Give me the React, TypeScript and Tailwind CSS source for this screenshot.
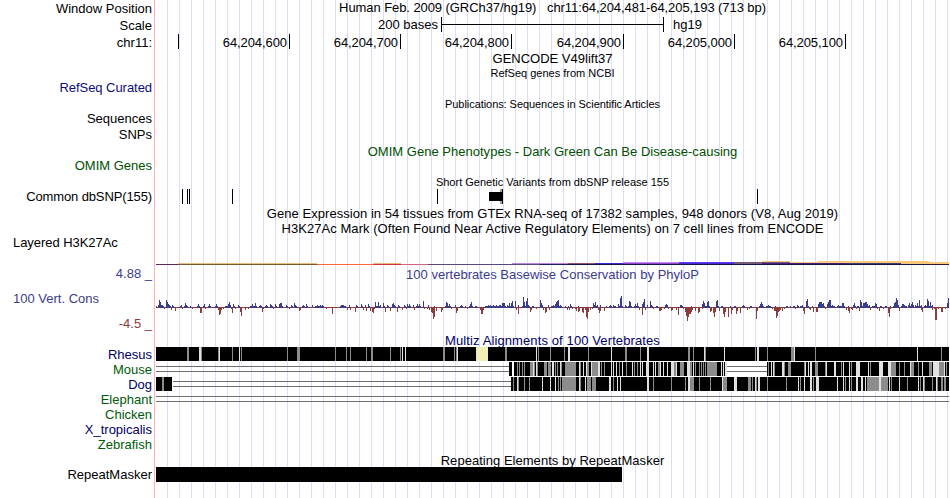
import React from 'react';
import clsx from 'clsx';

const START = 156;
const WIDTH = 793;

const labels = [
  { text: 'Window Position', cls: 'mt-px' },
  { text: 'Scale', cls: 'mt-[2px]' },
  { text: 'chr11:', cls: 'mt-[2px]' },
  { text: 'RefSeq Curated', cls: 'mt-[30px] tracking-[-0.05px] text-[#0c0c78]' },
  { text: 'Sequences', cls: 'mt-[16px]' },
  { text: 'SNPs', cls: 'mt-px' },
  { text: 'OMIM Genes', cls: 'mt-[16px] text-[#005000]' },
  { text: 'Common dbSNP(155)', cls: 'mt-[16px] tracking-[-0.12px]' },
  { text: 'Layered H3K27Ac', cls: 'mt-[31px] self-start ml-[13px] tracking-[-0.05px]' },
  { text: '4.88 _', cls: 'mt-[16px] text-[#3c3c8c]' },
  { text: '100 Vert. Cons', cls: 'mt-[10px] self-start ml-[13px] text-[#3c3c8c]' },
  { text: '-4.5 _', cls: 'mt-[10px] text-[#8c3c3c]' },
  { text: 'Rhesus', cls: 'mt-[16px] text-[#000064]' },
  { text: 'Mouse', cls: 'text-[#005a0a]' },
  { text: 'Dog', cls: 'text-[#000064]' },
  { text: 'Elephant', cls: 'text-[#005a0a]' },
  { text: 'Chicken', cls: 'text-[#005a0a]' },
  { text: 'X_tropicalis', cls: 'text-[#000064]' },
  { text: 'Zebrafish', cls: 'text-[#005a0a]' },
  { text: 'RepeatMasker', cls: 'mt-[15px]' },
];

const ruler = [
  { x: 178, text: '' },
  { x: 289, text: '64,204,600' },
  { x: 400, text: '64,204,700' },
  { x: 511, text: '64,204,800' },
  { x: 623, text: '64,204,900' },
  { x: 734, text: '64,205,000' },
  { x: 845, text: '64,205,100' },
];

// conservation peaks, "position:height"
const up =
  '158:2 159:7 160:5 161:2 162:2 166:7 167:5 168:3 169:2 172:2 181:2 185:4 186:2 198:3 204:3 209:3 216:3 228:3 229:5 230:2 233:3 238:2 252:3 255:4 260:2 266:2 270:3 271:2 275:3 279:3 280:4 281:4 286:2 291:2 294:4 295:2 303:2 306:3 312:2 317:2 ' +
  '320:2 322:2 341:2 342:2 343:2 349:2 356:2 361:3 365:2 368:3 375:5 378:5 380:2 383:4 387:2 392:3 393:4 394:2 398:2 404:2 407:3 409:3 413:2 417:3 419:3 423:6 428:2 434:1 446:5 447:4 449:3 455:2 461:2 470:3 471:5 475:1 485:1 488:2 490:2 493:2 496:2 499:2 500:2 502:4 503:4 504:4 507:2 509:4 511:4 512:6 515:6 518:2 523:10 524:5 526:6 527:9 528:2 532:1 540:7 541:4 542:2 548:2 553:2 555:3 556:5 557:6 558:7 560:2 568:1 570:3 578:1 593:4 594:2 595:5 597:2 600:2 606:1 610:2 613:2 618:3 620:9 621:11 625:2 629:6 630:5 635:3 637:4 642:3 643:5 644:8 647:2 650:6 651:2 ' +
  '656:1 665:2 666:3 667:2 680:2 681:2 691:1 702:3 703:6 704:4 707:5 708:6 716:6 717:7 718:1 722:1 730:1 735:1 743:2 750:1 760:3 761:5 762:3 767:1 768:2 775:1 787:1 793:1 797:2 ' +
  '802:2 806:6 807:8 812:1 818:3 819:5 820:5 821:5 822:3 823:4 827:3 828:5 829:7 830:7 832:2 834:1 838:2 842:4 843:4 848:1 853:2 854:4 857:1 860:7 861:5 863:4 864:4 865:5 866:5 867:3 869:2 873:1 875:4 876:3 880:1 885:1 890:1 894:4 895:5 896:9 897:7 898:2 902:3 903:3 904:2 908:2 909:4 911:3 912:5 913:2 915:2 917:4 919:7 921:2 925:2 927:8 928:6 930:5 932:2 947:4 948:9';
const down =
  '158:1 164:2 171:3 175:4 182:2 192:2 195:1 200:6 201:6 205:2 211:1 218:3 219:8 220:7 221:3 223:2 231:2 232:6 235:2 237:1 240:5 241:9 245:3 248:2 262:5 263:2 268:1 273:2 278:1 285:1 289:2 293:1 299:4 300:3 305:1 310:1 313:1 ' +
  '326:2 330:1 332:7 335:1 338:1 347:3 350:3 355:5 359:1 363:3 366:4 370:4 372:5 373:6 374:2 381:1 385:5 390:4 397:5 401:1 402:3 406:2 411:1 414:3 421:1 424:2 427:2 429:3 431:5 432:6 433:12 434:10 436:4 438:1 441:5 442:3 451:2 453:1 456:6 457:4 463:1 467:2 474:1 480:3 481:7 482:7 483:3 506:1 514:1 516:3 518:7 520:1 530:5 531:3 536:2 539:1 543:3 545:6 546:5 549:3 563:1 567:3 569:3 572:2 573:1 575:2 576:4 578:5 579:4 582:5 583:6 585:3 586:10 587:12 588:5 590:3 592:2 598:3 599:6 600:4 604:4 607:1 612:1 617:1 623:1 632:1 639:3 642:8 645:3 648:1 ' +
  '653:2 655:1 659:4 660:4 661:3 664:2 668:2 671:4 672:3 676:3 678:8 683:2 685:5 686:9 687:14 688:10 689:7 690:7 691:5 692:3 695:4 698:6 699:5 702:2 710:5 711:4 713:6 714:10 715:5 719:4 723:7 724:10 725:5 728:10 731:7 732:3 736:7 737:4 740:6 745:1 747:3 749:2 756:12 757:4 764:1 772:2 774:4 775:4 776:11 777:9 778:5 779:4 780:3 782:4 784:2 788:1 792:1 795:2 ' +
  '803:4 804:7 809:2 810:3 813:5 816:5 817:5 825:2 835:1 846:3 848:4 849:6 851:2 852:3 856:2 859:4 870:3 877:2 879:4 883:2 888:6 889:10 890:2 899:4 908:1 914:1 921:3 922:5 932:3 934:2 935:13 936:13 938:2 941:5 942:5 945:2';

// alignment marks are "position" or "position*width", grouped by shade
const species = [
  {
    name: 'rhesus',
    blocks: [[156, 793]],
    lines: [],
    grey: '187*2 201 218 232 241 287 297*3 335 346 350 366 371*2 390 400 443*2 454 456 505*2 538 550 564 588 625*2 640 688*2 693 705 755 767 791*3 815 941',
    light: '199*2 219 239 402 405 457 476 536 568*2 611 647*2 704 724 757*2 794 917',
  },
  {
    name: 'mouse',
    blocks: [[509, 3], [514, 213], [767, 182]],
    lines: [[156, 353], [727, 40]],
    grey: '517 519 522 524 530*3 534 537 544*3 548*3 555 557 561 565*11 580 587*2 592*6 601 604 619 626 634 637 658*2 674*2 680*4 690*2 695 699 701 703 705 707*10 768 774 784 788*3 804 815*3 825 841 851 870 891*5 899 904 911*3 918 929*3 939*5 946',
    light: '533 536 552*2 560 579 583 586 591 598*2 611 613 616 622 632 640 642 646*3 653 655 660 663 667 671*3 676 687*3 693 721 723 725*2 771 773 782*2 805 808 810*2 826 834*2 843 849 856*4 868 879*4 888*3 910 922 933*6 944',
  },
  {
    name: 'dog',
    blocks: [[156, 16], [511, 438]],
    lines: [[173, 338]],
    grey: '162*2 513 518 524 529 558 560 562*14 580 587*4 592*4 613 653 671 685 690*4 699 710 723*4 748*3 752 756 767 786 800 813 845 851 867*12 881*7 891 907 920 924 932 937 941*2 944*2',
    light: '517 542 550 555 579 585 609*2 617 620 647*2 688*2 722 734*3 755 758*2 798 804 810*2 816*3 837 843 849 856*2 861*2 865 879*2 889 899 918 923 936',
  },
  { name: 'elephant', blocks: [], lines: [[156, 793]], grey: '', light: '' },
];

// H3K27Ac signal: x, y, width, height, colour
const signal: [number, number, number, number, string][] = [
  [156, 264, 22, 1, '#5a285a'],
  [178, 263, 139, 1, '#e6be82'],
  [178, 264, 139, 1, '#785a28'],
  [317, 264, 56, 1, '#ff643c'],
  [373, 263, 28, 1, '#f0b478'],
  [373, 264, 28, 1, '#d23240'],
  [401, 264, 27, 1, '#d2647d'],
  [428, 264, 112, 1, '#5a4682'],
  [512, 263, 56, 1, '#c882e6'],
  [540, 264, 28, 1, '#1e1e64'],
  [568, 263, 27, 1, '#96506e'],
  [595, 263, 28, 1, '#3c28d2'],
  [568, 264, 381, 1, '#141450'],
  [623, 262, 56, 1, '#d282fa'],
  [623, 263, 56, 1, '#8c46c8'],
  [679, 262, 55, 1, '#643cff'],
  [679, 263, 55, 1, '#4628c8'],
  [734, 262, 56, 2, '#785a78'],
  [762, 261, 28, 1, '#fac878'],
  [790, 262, 28, 1, '#fac878'],
  [762, 263, 84, 1, '#461e82'],
  [818, 261, 111, 2, '#fac878'],
  [846, 263, 55, 1, '#3c3c6e'],
  [901, 262, 48, 2, '#fac878'],
  [929, 264, 20, 1, '#3c1432'],
];

function parsePeaks(s: string) {
  return s.split(' ').map((p) => p.split(':').map(Number));
}

function parseMarks(s: string) {
  return s ? s.split(' ').map((p) => p.split('*').map(Number)) : [];
}

function Chart({ y, h, className, children }: { y: number; h: number; className?: string; children: React.ReactNode }) {
  return (
    <svg className={clsx('block shrink-0', className)} width={WIDTH} height={h} viewBox={`${START} ${y} ${WIDTH} ${h}`} shapeRendering="crispEdges">
      {children}
    </svg>
  );
}

function Title({ children, className }: { children: React.ReactNode; className?: string }) {
  return <div className={clsx('flex h-[15px] shrink-0 justify-center whitespace-pre', className)}>{children}</div>;
}

function Ruler() {
  return (
    <div className="mt-[2px] flex h-[15px]">
      {ruler.map((t, i) => (
        <div
          key={t.x}
          className="flex shrink-0 justify-end border-r border-black pr-[2px] tracking-[-0.08px]"
          style={{ width: t.x + 1 - (i === 0 ? START : ruler[i - 1].x + 1) }}
        >
          <span className="pt-px">{t.text}</span>
        </div>
      ))}
    </div>
  );
}

function Wiggle() {
  const ups = parsePeaks(up);
  const downs = parsePeaks(down);
  const taken = new Map<number, number>();
  ups.forEach(([x]) => taken.set(x, 1));
  downs.forEach(([x]) => taken.set(x, -1));
  const rest: { x: number; sign: number }[] = [];
  for (let x = START; x < START + WIDTH; x++) {
    if (taken.has(x)) continue;
    rest.push({ x, sign: taken.get(x - 1) ?? taken.get(x + 1) ?? (x % 5 < 2 ? 1 : -1) });
  }
  return (
    <Chart y={282} h={51}>
      {rest.map((r) => (
        <rect key={r.x} x={r.x} y={r.sign > 0 ? 306 : 307} width={1} height={r.sign > 0 ? 2 : 1} fill={r.sign > 0 ? '#3c3c8c' : '#8c3c3c'} />
      ))}
      {ups.map(([x, h]) => (
        <rect key={x} x={x} y={307 - h} width={1} height={h + 1} fill="#3c3c8c" />
      ))}
      {downs.map(([x, h]) => (
        <rect key={x} x={x} y={307} width={1} height={h} fill="#8c3c3c" />
      ))}
    </Chart>
  );
}

function Alignments() {
  return (
    <div className="-mt-px flex flex-col">
      {species.map((s) => (
        <Chart key={s.name} y={0} h={15}>
          {s.name === 'mouse' && <rect x={509} y={0} width={440} height={15} fill="#fff" />}
          {s.lines.map(([x, w]) => (
            <path key={x} d={`M${x} 4.5h${w}M${x} 9.5h${w}`} stroke="#6e6e6e" />
          ))}
          {s.blocks.map(([x, w]) => (
            <g key={x}>
              <rect x={x} y={0} width={w} height={15} fill="#fff" />
              <rect x={x} y={0} width={w} height={14} fill="#000" />
            </g>
          ))}
          {parseMarks(s.grey).map(([x, w = 1]) => (
            <rect key={x} x={x} y={0} width={w} height={14} fill="#8c8c8c" />
          ))}
          {parseMarks(s.light).map(([x, w = 1]) => (
            <rect key={x} x={x} y={0} width={w} height={14} fill="#e1e1e1" />
          ))}
          {s.name === 'rhesus' && <rect x={477} y={0} width={11} height={14} fill="#f0f0b4" />}
        </Chart>
      ))}
    </div>
  );
}

export default function App() {
  return (
    <div className="flex h-[498px] w-[950px] overflow-hidden bg-white font-['Liberation_Sans',Arial,sans-serif] text-[13px] leading-[15px] text-black">
      <div className="flex w-[154px] shrink-0 flex-col items-end pr-[2px]">
        {labels.map((l) => (
          <div key={l.text} className={clsx('h-[15px] shrink-0 whitespace-pre', l.cls)}>
            {l.text}
          </div>
        ))}
      </div>
      <div className="mr-px w-px shrink-0 bg-[#ffb4b4]" />
      <div className="flex w-[793px] shrink-0 flex-col bg-[linear-gradient(90deg,transparent_11px,#dcdcff_11px)] bg-[length:12px_100%]">
        <Title className="tracking-[-0.075px]">Human Feb. 2009 (GRCh37/hg19)   chr11:64,204,481-64,205,193 (713 bp)</Title>
        <div className="mt-[2px] flex h-[15px]">
          <div className="w-[282px] text-right">200 bases</div>
          <div className="ml-[3px] flex w-[223px] items-center border-x border-black">
            <div className="h-px w-full bg-black" />
          </div>
          <div className="ml-[9px]">hg19</div>
        </div>
        <Ruler />
        <Title className="mt-[2px]">GENCODE V49lift37</Title>
        <Title className="text-[11px]">RefSeq genes from NCBI</Title>
        <Title className="mt-[16px] text-[11px] tracking-[-0.06px]">Publications: Sequences in Scientific Articles</Title>
        <Title className="mt-[32px] tracking-[0.02px] text-[#005000]">OMIM Gene Phenotypes - Dark Green Can Be Disease-causing</Title>
        <Title className="mt-[16px] text-[11px]">Short Genetic Variants from dbSNP release 155</Title>
        <Chart y={189} h={15} className="-mt-px">
          {[182, 187, 189, 232, 437, 502, 757].map((x) => (
            <rect key={x} x={x} y={189} width={1} height={15} />
          ))}
          <rect x={500} y={189} width={2} height={15} fill="#a0a0a0" />
          <rect x={489} y={192} width={13} height={9} />
        </Chart>
        <Title className="mt-[2px] tracking-[0.045px]">Gene Expression in 54 tissues from GTEx RNA-seq of 17382 samples, 948 donors (V8, Aug 2019)</Title>
        <Title className="tracking-[0.05px]">H3K27Ac Mark (Often Found Near Active Regulatory Elements) on 7 cell lines from ENCODE</Title>
        <Chart y={236} h={31}>
          {signal.map(([x, y, w, h, fill], i) => (
            <rect key={i} x={x} y={y} width={w} height={h} fill={fill} />
          ))}
        </Chart>
        <Title className="tracking-[0.02px] text-[#3c3c8c]">100 vertebrates Basewise Conservation by PhyloP</Title>
        <Wiggle />
        <Title className="tracking-[0.11px] text-[#000064]">Multiz Alignments of 100 Vertebrates</Title>
        <Alignments />
        <Title className="mt-[46px] tracking-[0.03px]">Repeating Elements by RepeatMasker</Title>
        <div className="-mt-px h-[15px] w-[466px] shrink-0 bg-black" />
      </div>
    </div>
  );
}
